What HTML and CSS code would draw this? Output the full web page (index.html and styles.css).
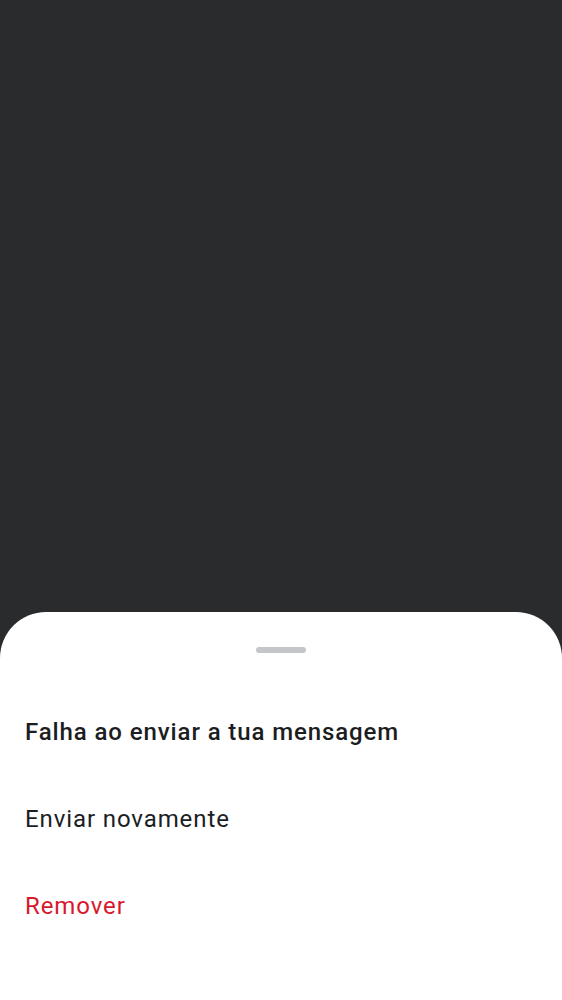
FILE: index.html
```html
<!DOCTYPE html>
<html lang="pt">
<head>
<meta charset="utf-8">
<link rel="stylesheet" href="styles.css">
</head>
<body>
<div class="backdrop"></div>
<div class="sheet">
  <div class="handle-row"><div class="handle"></div></div>
  <div class="item title">Falha ao enviar a tua mensagem</div>
  <div class="item">Enviar novamente</div>
  <div class="item danger">Remover</div>
</div>
</body>
</html>
```
FILE: styles.css
```css
html, body {
  margin: 0;
  padding: 0;
  height: 100%;
}
body {
  background: #2a2b2d;
  font-family: Roboto, "Noto Sans", sans-serif;
  display: flex;
  flex-direction: column;
  height: 1000px;
  overflow: hidden;
}
.backdrop {
  flex: 1;
}
.sheet {
  background: #ffffff;
  border-radius: 46px 46px 0 0;
  height: 388px;
  box-sizing: border-box;
  padding-top: 35px;
}
.handle-row {
  display: flex;
  justify-content: center;
  margin-bottom: 35px;
}
.handle {
  width: 50px;
  height: 6px;
  border-radius: 3px;
  background: #c4c6ca;
}
.item {
  height: 87px;
  display: flex;
  align-items: center;
  padding-left: 25px;
  font-size: 24px;
  color: #1c1d1f;
  letter-spacing: 0.9px;
}
.title {
  font-weight: 500;
}
.danger {
  color: #d7192d;
}
```
